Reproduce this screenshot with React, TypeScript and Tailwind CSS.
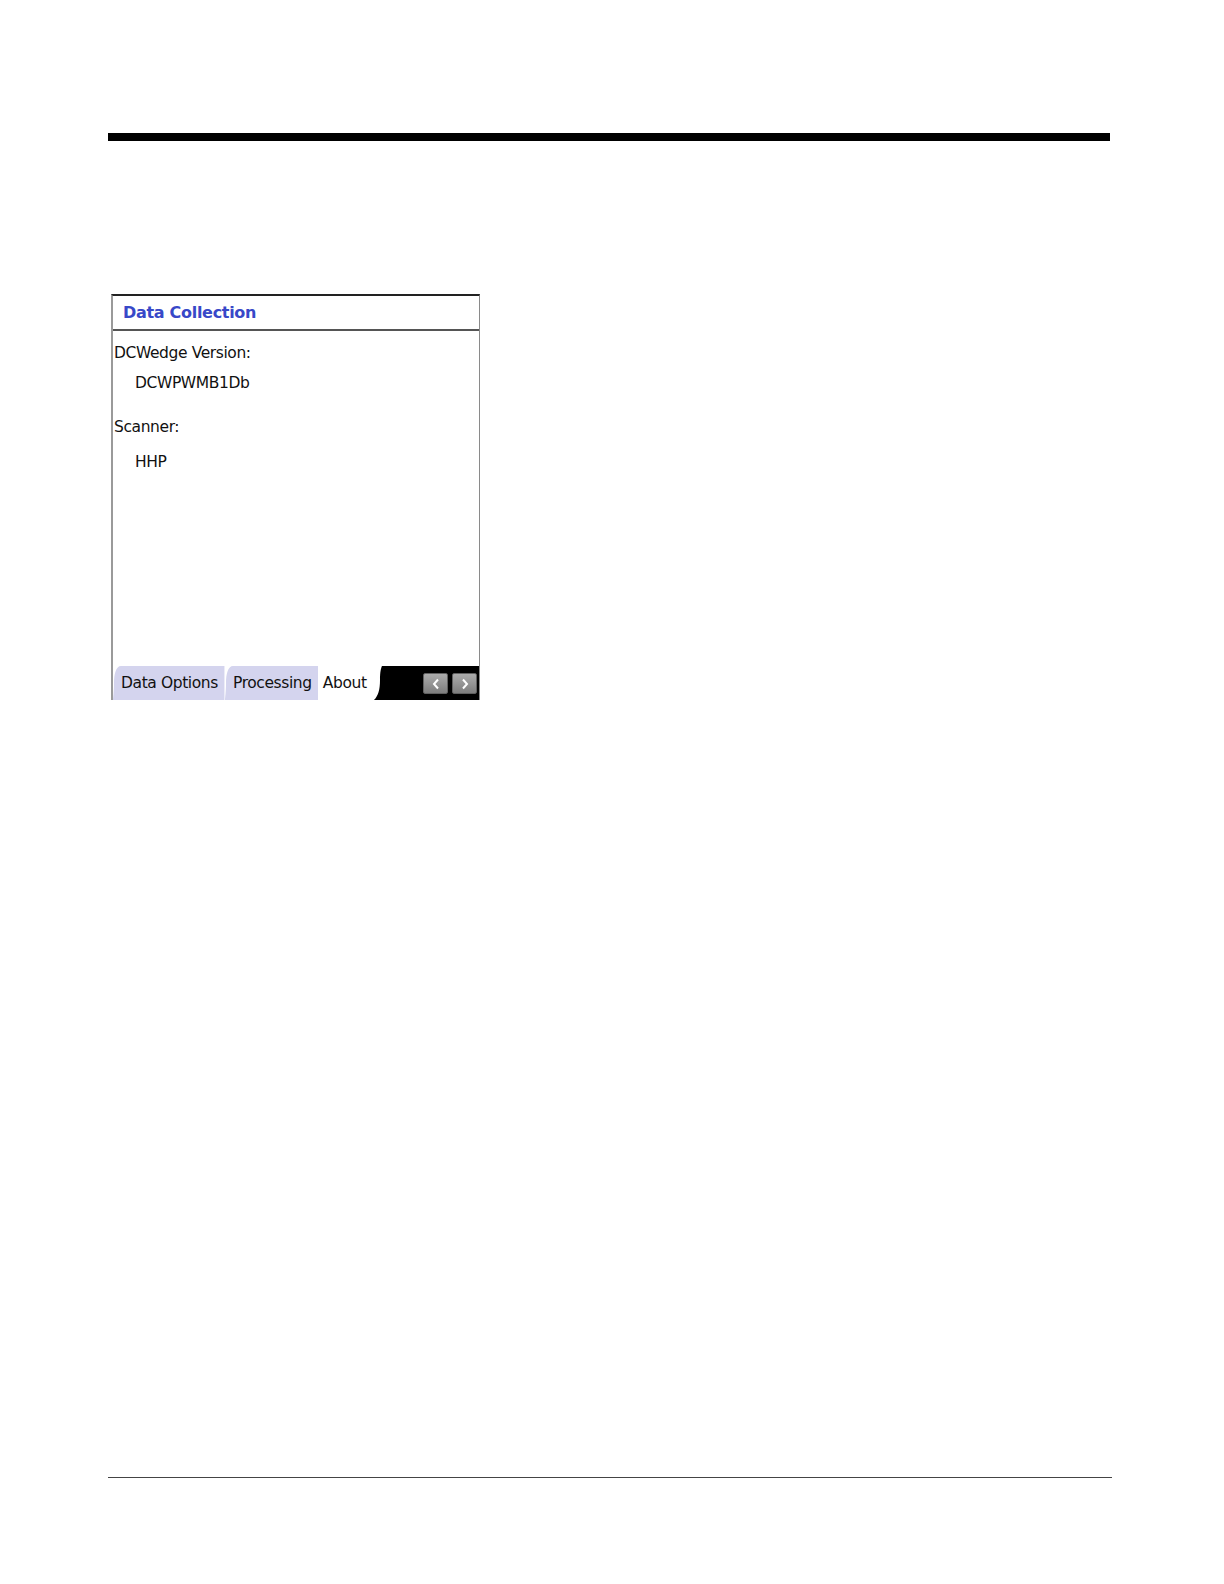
import React from "react";

function NavButton({ dir }: { dir: "left" | "right" }) {
  return (
    <div className="flex h-[21px] w-[25px] items-center justify-center rounded-[2px] bg-gradient-to-b from-[#acacac] to-[#7e7e7e] border border-[#606060]">
      <svg width="8" height="12" viewBox="0 0 8 12">
        <path
          d={dir === "left" ? "M6 1.5 L2 6 L6 10.5" : "M2 1.5 L6 6 L2 10.5"}
          fill="none"
          stroke="#ffffff"
          strokeWidth="2"
        />
      </svg>
    </div>
  );
}

function TabEdge({ fill }: { fill: string }) {
  // curved left edge of a tab
  return (
    <svg width="8" height="34" viewBox="0 0 8 34" className="shrink-0">
      <path d="M8 0 C3 0 1 8 1 17 C1 26 0 32 0 34 L8 34 Z" fill={fill} />
    </svg>
  );
}

function DeviceScreen() {
  return (
    <div
      className="flex h-[406px] w-[369px] flex-col border-t-2 border-l-2 border-r border-t-[#222] border-l-[#9a9a9a] border-r-[#8a8a8a] bg-white"
      style={{ fontFamily: '"DejaVu Sans", sans-serif' }}
    >
      <div className="flex h-[35px] items-center border-b-2 border-[#555] pl-[10px]">
        <span className="text-[16px] font-bold tracking-[-0.3px] text-[#3848c8]">
          Data Collection
        </span>
      </div>
      <div className="flex-1 pl-[1px] text-[15.5px] tracking-[-0.4px] text-[#111]">
        <div className="mt-[11px]">DCWedge Version:</div>
        <div className="mt-[7px] pl-[21px]">DCWPWMB1Db</div>
        <div className="mt-[20px]">Scanner:</div>
        <div className="mt-[12px] pl-[21px]">HHP</div>
      </div>
      <div className="flex h-[34px] items-stretch bg-white text-[15.5px] tracking-[-0.4px] text-[#111]">
        <TabEdge fill="#d4d4ee" />
        <div className="flex items-center bg-[#d4d4ee] pr-[6px] pt-[2px]">Data Options</div>
        <div className="w-px bg-[#ececf8]" />
        <TabEdge fill="#d4d4ee" />
        <div className="flex items-center bg-[#d4d4ee] pr-[6px] pt-[2px]">Processing</div>
        <div className="flex items-center bg-white pl-[5px] pr-[5px] pt-[2px]">About</div>
        <div className="flex flex-1 bg-black">
          <svg width="10" height="34" viewBox="0 0 10 34" className="shrink-0">
            <path d="M0 0 L0 34 L2 34 C6 30 8 24 8 14 C8 6 9 2 10 0 Z" fill="white" />
          </svg>
          <div className="ml-auto flex items-center gap-[4px] pr-[2px] pt-[1px]">
            <NavButton dir="left" />
            <NavButton dir="right" />
          </div>
        </div>
      </div>
    </div>
  );
}

export default function App() {
  return (
    <div className="relative h-[1584px] w-full overflow-hidden bg-white">
      <div className="pt-[133px] pl-[108px]">
        <div className="h-[8px] w-[1002px] bg-black" />
      </div>
      <div className="pt-[153px] pl-[111px]">
        <DeviceScreen />
      </div>
      <div className="pt-[777px] pl-[108px]">
        <div className="h-px w-[1004px] bg-[#444]" />
      </div>
    </div>
  );
}
